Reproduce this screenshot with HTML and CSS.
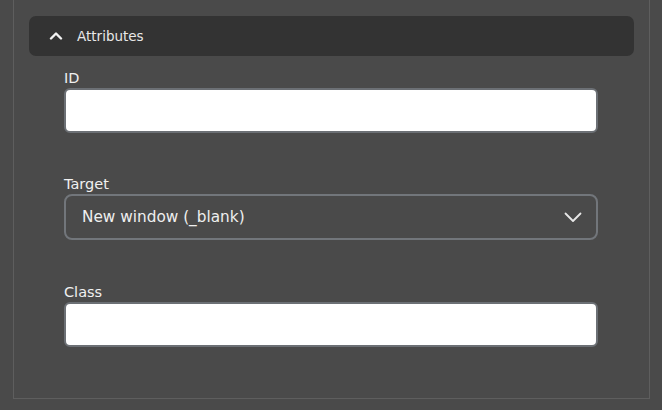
FILE: index.html
```html
<!DOCTYPE html>
<html>
<head>
<meta charset="utf-8">
<link rel="stylesheet" href="styles.css">
</head>
<body>
<div class="panel">
  <div class="section-header">
    <svg class="chev-up" width="14" height="9" viewBox="0 0 14 9"><path d="M2 7.5 L7 2.5 L12 7.5" fill="none" stroke="#f2f2f2" stroke-width="2.4" stroke-linecap="round" stroke-linejoin="round"/></svg>
    <span class="section-title">Attributes</span>
  </div>
  <div class="fields">
    <div class="field">
      <label class="label">ID</label>
      <div class="text-input"></div>
    </div>
    <div class="field">
      <label class="label">Target</label>
      <div class="select">
        <span class="select-value">New window (_blank)</span>
        <svg class="chev-down" width="18" height="11" viewBox="0 0 18 11"><path d="M1.5 1.5 L9 9 L16.5 1.5" fill="none" stroke="#e8e8e8" stroke-width="1.8" stroke-linecap="round" stroke-linejoin="round"/></svg>
      </div>
    </div>
    <div class="field field-last">
      <label class="label">Class</label>
      <div class="text-input"></div>
    </div>
  </div>
</div>
</body>
</html>
```
FILE: styles.css
```css
html, body {
  margin: 0;
  padding: 0;
  background: #4a4a4a;
  font-family: "DejaVu Sans", "Liberation Sans", sans-serif;
  color: #ececec;
}
.panel {
  margin-left: 13px;
  width: 637px;
  height: 399px;
  border: 1px solid #5e5e5e;
  border-top: none;
  padding: 16px 15px 0 15px;
  box-sizing: border-box;
}
.section-header {
  height: 40px;
  background: #333333;
  border-radius: 7px;
  display: flex;
  align-items: center;
  padding-left: 20px;
}
.chev-up {
  margin-right: 14px;
  margin-top: -1px;
}
.section-title {
  font-size: 13.5px;
  color: #e8e8e8;
}
.fields {
  padding: 14px 36px 0 35px;
  display: flex;
  flex-direction: column;
  gap: 43px;
}
.field {
  display: flex;
  flex-direction: column;
}
.field-last {
  margin-top: 1px;
}
.label {
  font-size: 14.5px;
  line-height: 16px;
  margin-bottom: 2px;
  color: #f0f0f0;
}
.text-input {
  height: 45px;
  box-sizing: border-box;
  background: #ffffff;
  border: 2px solid #6c7075;
  border-radius: 6px;
}
.select {
  height: 46px;
  box-sizing: border-box;
  border: 2px solid #72767b;
  border-radius: 8px;
  display: flex;
  align-items: center;
  justify-content: space-between;
  padding: 0 14px 0 16px;
}
.select-value {
  font-size: 15.3px;
  color: #efefef;
}
.chev-down {
  margin-top: 1px;
}
```
